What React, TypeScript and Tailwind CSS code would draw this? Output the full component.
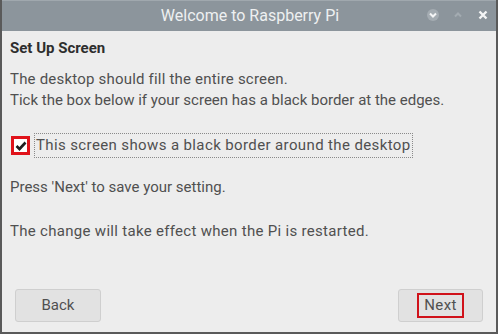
import React from "react";

export default function App() {
  return (
    <div className="w-[498px] h-[334px] bg-[#ededed] overflow-hidden" style={{ fontFamily: "Roboto, 'Liberation Sans', sans-serif" }}>
      <div className="w-full h-full border-2 border-t-0 border-[#5a5a5a] flex flex-col">
        <div className="h-[31px] bg-[#8c959c] border-t border-[#a0a8ae] flex items-center relative">
          <div className="flex-1 text-center text-[16px] text-[#eef0f1] pl-[2px]">Welcome to Raspberry Pi</div>
          <div className="absolute right-[7px] top-[8px] flex items-center gap-[13px]">
            <svg width="12" height="12" viewBox="0 0 12 12">
              <circle cx="6" cy="6" r="6" fill="#a4acb2" />
              <path d="M3 4.5 L6 7.5 L9 4.5" stroke="#f4f5f6" strokeWidth="2" fill="none" />
            </svg>
            <svg width="12" height="12" viewBox="0 0 12 12">
              <path d="M3 7.5 L6 4.5 L9 7.5" stroke="#a3abb1" strokeWidth="2" fill="none" />
            </svg>
            <svg width="12" height="12" viewBox="0 0 12 12">
              <path d="M2.5 2.5 L9.5 9.5 M9.5 2.5 L2.5 9.5" stroke="#f4f5f6" strokeWidth="2.4" fill="none" />
            </svg>
          </div>
        </div>
        <div className="flex-1 flex flex-col pl-[8px] pr-[12px] text-[#505050] text-[15px]">
          <div className="mt-[7px] h-[20px] leading-[20px] font-bold text-[#2e2e2e]">Set Up Screen</div>
          <div className="mt-[11px] leading-[21px]">
            <div className="tracking-[0.2px]">The desktop should fill the entire screen.</div>
            <div>Tick the box below if your screen has a black border at the edges.</div>
          </div>
          <div className="mt-[22px] flex items-center">
            <div className="ml-[1px] w-[19px] h-[19px] bg-[#e0131b] flex items-center justify-center">
              <div className="w-[13px] h-[13px] bg-white flex items-center justify-center">
                <svg width="12" height="12" viewBox="0 0 12 12">
                  <path d="M1.5 6 L4.5 9 L10.5 2.5" stroke="#1e1e1e" strokeWidth="2.6" fill="none" />
                </svg>
              </div>
            </div>
            <div className="ml-[4px] px-[1px] h-[25px] leading-[23px] border border-dotted border-[#8a8a8a] tracking-[0.38px]">This screen shows a black border around the desktop</div>
          </div>
          <div className="mt-[19px] leading-[21px]">Press 'Next' to save your setting.</div>
          <div className="mt-[23px] leading-[21px] tracking-[0.3px]">The change will take effect when the Pi is restarted.</div>
          <div className="flex-1" />
          <div className="flex justify-between mb-[10px] px-[5px] pr-[1px]">
            <div className="w-[86px] h-[33px] bg-[#e2e2e2] border border-[#cfcfcf] rounded-[3px] flex items-center justify-center">Back</div>
            <div className="w-[85px] h-[33px] bg-[#e2e2e2] border border-[#cfcfcf] rounded-[3px] flex items-center justify-center">
              <span className="border-2 border-[#d0121a] px-[5px] h-[25px] leading-[21px] tracking-[0.4px]">Next</span>
            </div>
          </div>
        </div>
      </div>
    </div>
  );
}
